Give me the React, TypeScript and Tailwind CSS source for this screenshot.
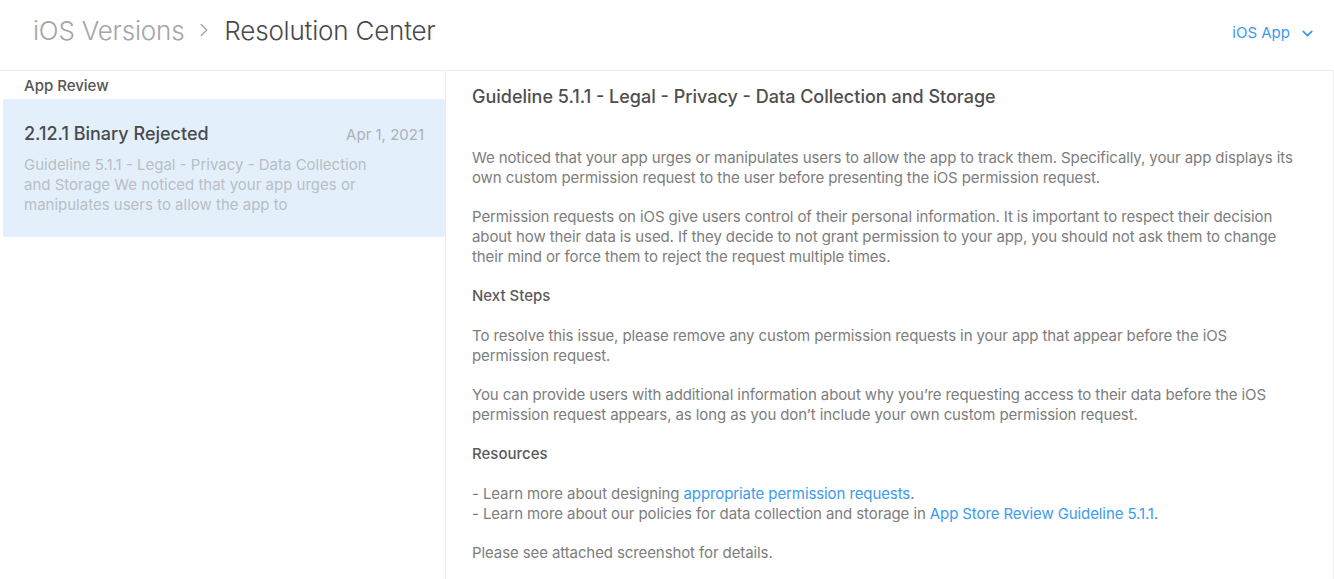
import { ChevronDown, ChevronRight } from "lucide-react";

const font = { fontFamily: "Inter, 'Noto Sans', sans-serif" };

const Para = ({ children }: { children: React.ReactNode }) => (
  <p className="text-[15px] leading-[20px] tracking-[-0.1px] text-[#7d7d7d]">{children}</p>
);

const Heading = ({ children }: { children: React.ReactNode }) => (
  <h3 className="mb-[1px] text-[15px] leading-[20px] font-medium text-[#5a5a5a]">{children}</h3>
);

const Link = ({ children }: { children: React.ReactNode }) => (
  <a className="text-[#3d9bea]">{children}</a>
);

export default function App() {
  return (
    <div className="w-[1334px] h-[579px] bg-white overflow-hidden flex flex-col" style={font}>
      <header className="h-[71px] flex items-center justify-between pl-[33px] pr-[18px] pb-[10px] border-b border-[#ebebeb] shrink-0">
        <div className="flex items-center gap-[9px] text-[26px] font-light tracking-[-0.2px]">
          <span className="text-[#a5a5a5]">iOS Versions</span>
          <ChevronRight className="w-[22px] h-[22px] text-[#a5a5a5]" strokeWidth={1.5} />
          <span className="text-[#4a4a4a]">Resolution Center</span>
        </div>
        <div className="flex items-center gap-[9px] pt-[6px] text-[15px] text-[#3d9bea]">
          <span>iOS App</span>
          <ChevronDown className="w-[17px] h-[17px]" strokeWidth={2.5} />
        </div>
      </header>

      <div className="flex flex-1 min-h-0">
        <aside className="w-[446px] shrink-0 border-r border-[#ececec] pl-[3px]">
          <div className="h-[28px] flex items-center pl-[21px] pt-[3px] text-[15px] font-medium text-[#555]">App Review</div>
          <div className="h-[138px] bg-[#e3f0fb] pl-[21px] pr-[21px] pt-[21px]">
            <div className="flex items-baseline justify-between">
              <span className="text-[18px] font-medium text-[#4a4a4a]">2.12.1 Binary Rejected</span>
              <span className="text-[15px] text-[#acb1b6]">Apr 1, 2021</span>
            </div>
            <p className="mt-[8px] w-[350px] text-[15px] leading-[20px] text-[#b9bec3]">
              Guideline 5.1.1 - Legal - Privacy - Data Collection and Storage We noticed that your app urges or manipulates users to allow the app to
            </p>
          </div>
        </aside>

        <main className="flex-1 pl-[26px] border-r border-[#efefef]">
          <h2 className="mt-[14px] text-[18px] leading-[24px] font-medium text-[#4e4e4e]">
            Guideline 5.1.1 - Legal - Privacy - Data Collection and Storage
          </h2>
          <div className="mt-[39px] w-[830px] flex flex-col gap-[19px]">
            <Para>
              We noticed that your app urges or manipulates users to allow the app to track them. Specifically, your app displays its own custom permission request to the user before presenting the iOS permission request.
            </Para>
            <Para>
              Permission requests on iOS give users control of their personal information. It is important to respect their decision about how their data is used. If they decide to not grant permission to your app, you should not ask them to change their mind or force them to reject the request multiple times.
            </Para>
            <Heading>Next Steps</Heading>
            <Para>
              To resolve this issue, please remove any custom permission requests in your app that appear before the iOS permission request.
            </Para>
            <Para>
              You can provide users with additional information about why you’re requesting access to their data before the iOS permission request appears, as long as you don’t include your own custom permission request.
            </Para>
            <Heading>Resources</Heading>
            <Para>
              - Learn more about designing <Link>appropriate permission requests</Link>.
              <br />- Learn more about our policies for data collection and storage in <Link>App Store Review Guideline 5.1.1</Link>.
            </Para>
            <Para>Please see attached screenshot for details.</Para>
          </div>
        </main>
      </div>
    </div>
  );
}
